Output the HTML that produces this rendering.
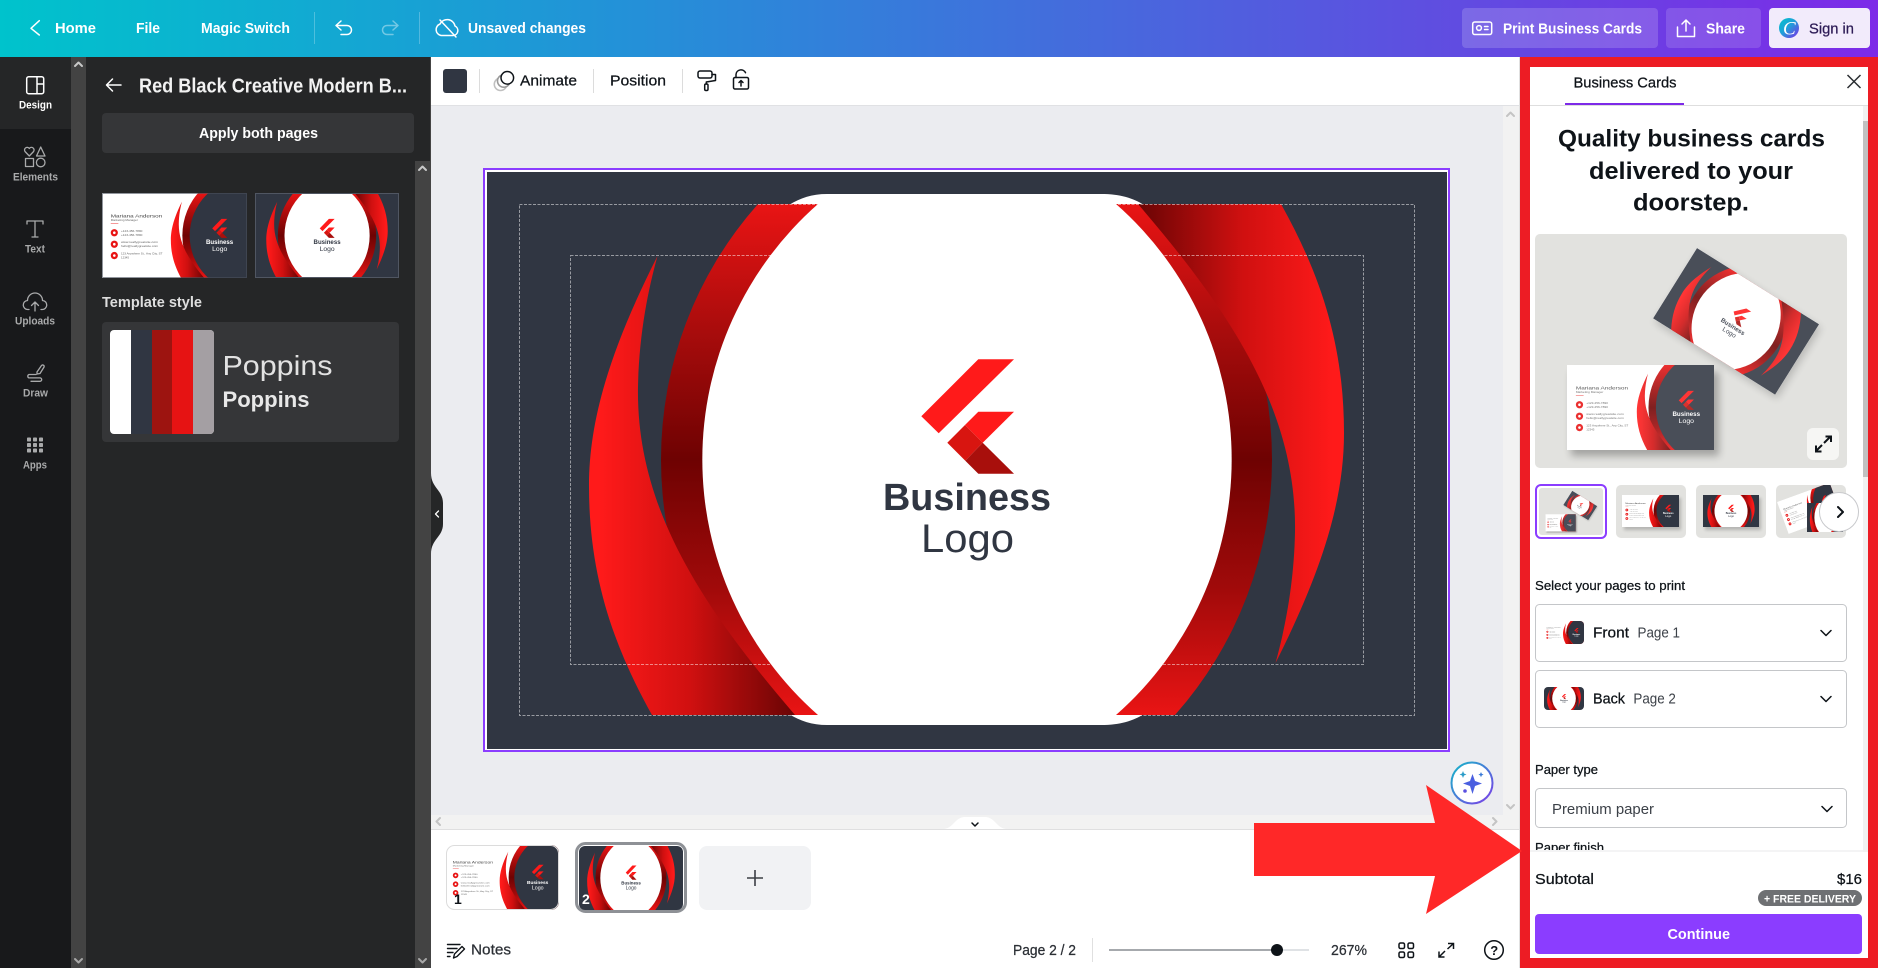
<!DOCTYPE html>
<html lang="en"><head><meta charset="utf-8"><title>Business Card Editor</title>
<style>
html,body{margin:0;padding:0;width:1878px;height:968px;overflow:hidden;background:#fff}
svg{display:block;font-family:"Liberation Sans",sans-serif}
.m{stroke:currentColor;stroke-width:.25}
.ln{fill:none;stroke-linecap:round;stroke-linejoin:round}
</style></head><body>
<svg width="1878" height="968" viewBox="0 0 1878 968" xmlns="http://www.w3.org/2000/svg">
<defs>
<linearGradient id="top" x1="0" x2="1" y1="0" y2="0"><stop offset="0" stop-color="#00c3cc"/><stop offset=".34" stop-color="#2490d8"/><stop offset=".75" stop-color="#5d50e0"/><stop offset="1" stop-color="#7d2ae8"/></linearGradient>
<linearGradient id="gc" gradientUnits="userSpaceOnUse" x1="600" x2="800" y1="0" y2="0"><stop offset="0" stop-color="#ff1a1a"/><stop offset=".45" stop-color="#d01010"/><stop offset="1" stop-color="#640404"/></linearGradient>
<linearGradient id="gr" gradientUnits="userSpaceOnUse" x1="0" x2="0" y1="204" y2="715"><stop offset="0" stop-color="#e91414"/><stop offset=".25" stop-color="#a80c0c"/><stop offset=".5" stop-color="#6e0202"/><stop offset=".75" stop-color="#a00a0a"/><stop offset="1" stop-color="#e91414"/></linearGradient>
<linearGradient id="mg" x1="0" x2="1" y1="0" y2="1"><stop offset="0" stop-color="#14b8c8"/><stop offset="1" stop-color="#7d3ce8"/></linearGradient>
<linearGradient id="cl" x1="0" x2="1" y1="0" y2="1"><stop offset="0" stop-color="#00c4cc"/><stop offset=".45" stop-color="#1fa0d8"/><stop offset="1" stop-color="#7d2ae8"/></linearGradient>
<filter id="bl" x="-30%" y="-30%" width="160%" height="160%"><feGaussianBlur stdDeviation="4"/></filter>
<filter id="bl2" x="-30%" y="-30%" width="160%" height="160%"><feGaussianBlur stdDeviation="1.5"/></filter>
<clipPath id="c1"><rect x="1535" y="234" width="312" height="234" rx="5"/></clipPath>
<clipPath id="c2"><rect x="1539" y="488" width="64" height="47" rx="3"/></clipPath>
<clipPath id="c3"><rect x="1776" y="485" width="70" height="53" rx="5"/></clipPath>
<clipPath id="c4"><rect x="1544" y="621" width="40" height="23" rx="4"/></clipPath>
<clipPath id="c5"><rect x="1544" y="687" width="40" height="23" rx="4"/></clipPath>
<clipPath id="c6"><rect x="446" y="845" width="113" height="65" rx="8"/></clipPath>
<clipPath id="c7"><rect x="579" y="846" width="104" height="64" rx="6"/></clipPath>
<g id="mark">
<polygon points="978.3,359.3 1014,359.3 938.7,433.3 921.3,416.3" fill="#ff1a1a"/>
<polygon points="978.3,411.7 1014,411.7 982.7,442.7 965,425" fill="#ff1a1a"/>
<polygon points="965,425 982.7,442.7 965.3,460.7 947.3,442.7" fill="#d81510"/>
<polygon points="982.7,442.7 1014,473.7 978.3,473.7 965.3,460.7" fill="#a80f0c"/>
</g>
<path id="cres" fill="url(#gc)" d="M657.5,256 C610,350 589,420 589,486 C589,570 610,640 652,715 L795,715 C705,610 636,510 638,387 C639,335 648,290 657.5,256 Z"/>
<symbol id="back" viewBox="519 204 895 511" preserveAspectRatio="none">
<rect x="519" y="204" width="895" height="511" fill="#303642"/>
<path d="M758,204 A385,385 0 0 0 758,715 L1175,715 A385,385 0 0 0 1175,204 Z" fill="url(#gr)"/>
<use href="#cres"/>
<use href="#cres" transform="rotate(180 966.5 459.5)"/>
<path d="M818,204 A340,340 0 0 0 818,715 L1116,715 A340,340 0 0 0 1116,204 Z" fill="#fff"/>
<use href="#mark"/>
<text x="883" y="510" font-size="38" font-weight="700" fill="#303642" textLength="168" lengthAdjust="spacingAndGlyphs">Business</text>
<text x="921" y="552" font-size="40" fill="#303642" textLength="93" lengthAdjust="spacingAndGlyphs">Logo</text>
</symbol>
<symbol id="front" viewBox="519 204 895 511" preserveAspectRatio="none">
<rect x="519" y="204" width="895" height="511" fill="#fff"/>
<circle cx="1400" cy="459.5" r="385" fill="url(#gr)"/>
<circle cx="1400" cy="459.5" r="340" fill="#303642"/>
<use href="#cres" transform="translate(355 0)"/>
<use href="#mark" transform="translate(278 0)"/>
<text x="1161" y="510" font-size="38" font-weight="700" fill="#fff" textLength="168" lengthAdjust="spacingAndGlyphs">Business</text>
<text x="1199" y="552" font-size="40" fill="#fff" textLength="93" lengthAdjust="spacingAndGlyphs">Logo</text>
<text x="573" y="351" font-size="28" fill="#444" textLength="318" lengthAdjust="spacingAndGlyphs">Mariana Anderson</text>
<text x="573" y="373" font-size="14" fill="#666" textLength="167" lengthAdjust="spacingAndGlyphs">Marketing Manager</text>
<rect x="573" y="387" width="47" height="3" fill="#e33"/>
<circle cx="595" cy="443" r="22" fill="#e81414"/><circle cx="595" cy="512" r="22" fill="#e81414"/><circle cx="595" cy="580" r="22" fill="#e81414"/>
<circle cx="595" cy="443" r="8" fill="#fff"/><circle cx="595" cy="512" r="8" fill="#fff"/><circle cx="595" cy="580" r="8" fill="#fff"/>
<g font-size="16" fill="#666">
<text x="636" y="439" textLength="132" lengthAdjust="spacingAndGlyphs">+123-456-7890</text>
<text x="636" y="464" textLength="132" lengthAdjust="spacingAndGlyphs">+123-456-7890</text>
<text x="636" y="506" textLength="229" lengthAdjust="spacingAndGlyphs">www.reallygreatsite.com</text>
<text x="636" y="530" textLength="229" lengthAdjust="spacingAndGlyphs">hello@reallygreatsite.com</text>
<text x="636" y="574" textLength="256" lengthAdjust="spacingAndGlyphs">123 Anywhere St., Any City, ST</text>
<text x="636" y="598" textLength="50" lengthAdjust="spacingAndGlyphs">12345</text>
</g>
</symbol>
<symbol id="hero" viewBox="1535 234 312 234" preserveAspectRatio="none">
<rect x="1535" y="234" width="312" height="234" fill="#e2e2df"/>
<rect x="1571" y="372" width="148" height="84" fill="#000" opacity=".28" filter="url(#bl)"/>
<g transform="translate(1699 252) rotate(32)"><rect width="144" height="83" fill="#000" opacity=".18" filter="url(#bl)"/></g>
<g transform="translate(1697 248) rotate(32)"><rect width="144" height="83" fill="#fff"/><use href="#back" width="144" height="83" opacity=".88"/></g>
<rect x="1567" y="365" width="147" height="85" fill="#fff"/><use href="#front" x="1567" y="365" width="147" height="85" opacity=".88"/>
</symbol>
</defs>

<!-- top bar -->
<rect width="1878" height="57" fill="url(#top)"/>
<g fill="#fff" font-size="15" font-weight="700">
<text x="55" y="33" textLength="41" lengthAdjust="spacingAndGlyphs">Home</text>
<text x="136" y="33" textLength="24" lengthAdjust="spacingAndGlyphs">File</text>
<text x="201" y="33" textLength="89" lengthAdjust="spacingAndGlyphs">Magic Switch</text>
<text x="468" y="33" textLength="118" lengthAdjust="spacingAndGlyphs">Unsaved changes</text>
</g>
<g class="ln" stroke="#fff" stroke-width="1.5">
<path d="M39.3,20.7 L31,28.3 L39.3,35"/>
<path d="M341,21 L336,25.5 L341,30 M336,25.5 H347 a4.5,4.5 0 0 1 0,9 H341"/>
<path d="M393,21 L398,25.5 L393,30 M398,25.5 H387 a4.5,4.5 0 0 0 0,9 H393" opacity=".4"/>
<path d="M441,35.5 H453 a5,5 0 0 0 2,-9.5 a8,8 0 0 0 -15,-2 a6,6 0 0 0 1,11.5 Z"/>
<path d="M440,20 L456,37"/>
</g>
<rect x="314" y="12" width="1" height="32" fill="#fff" opacity=".25"/>
<rect x="419" y="12" width="1" height="32" fill="#fff" opacity=".25"/>
<rect x="1462" y="8" width="196" height="40" rx="4" fill="#fff" opacity=".17"/>
<rect x="1666" y="8" width="95" height="40" rx="4" fill="#fff" opacity=".14"/>
<rect x="1769" y="8" width="101" height="40" rx="4" fill="#f2ebfb"/>
<g class="ln" stroke="#fff" stroke-width="1.5">
<rect x="1472.7" y="22" width="19" height="12.5" rx="2"/><circle cx="1479" cy="28" r="2.4"/><path d="M1484.5,26.5 H1488 M1484.5,29.5 H1488"/>
<path d="M1677.5,27 V36.5 H1694.5 V27 M1686,31 V20 M1682,24 L1686,20 L1690,24"/>
</g>
<g fill="#fff" font-size="15" font-weight="700">
<text x="1503" y="33.5" textLength="139" lengthAdjust="spacingAndGlyphs">Print Business Cards</text>
<text x="1706" y="33.5" textLength="39" lengthAdjust="spacingAndGlyphs">Share</text>
</g>
<circle cx="1789" cy="28" r="10" fill="url(#cl)"/>
<text x="1783" y="34.5" font-size="19" font-style="italic" fill="#fff" style='font-family:"Liberation Serif",serif'>C</text>
<text x="1809" y="33.5" font-size="15" class="m" color="#2c1a55" fill="#2c1a55" textLength="45" lengthAdjust="spacingAndGlyphs">Sign in</text>

<!-- left rail -->
<rect y="57" width="71" height="911" fill="#18191b"/>
<rect y="57" width="71" height="72" fill="#252627"/>
<rect x="71" y="57" width="15" height="911" fill="#434343"/>
<path d="M75,66 L78.5,62.5 L82,66" class="ln" stroke="#c8c8c8" stroke-width="2"/>
<path d="M75,959 L78.5,962.5 L82,959" class="ln" stroke="#a8a8a8" stroke-width="2"/>
<g class="ln" stroke="#fff" stroke-width="1.5">
<rect x="26.7" y="76.7" width="17" height="17" rx="2"/><path d="M37,77 V93.5 M37,84 H43.5"/>
</g>
<g class="ln" stroke="#a9aaab" stroke-width="1.3">
<path d="M29.3,156 L25,151.5 a2.6,2.6 0 0 1 4.3,-3 a2.6,2.6 0 0 1 4.3,3 Z"/><path d="M40.7,147 L45,156 H36.5 Z"/><rect x="25.5" y="158.5" width="8" height="8"/><circle cx="40.7" cy="162.5" r="4.3"/>
<path d="M27,224 V221 H43 V224 M35,221 V237 M32,237 H38"/>
<path d="M29,309.5 H28 a4.5,4.5 0 0 1 -.5,-9 a7.5,7.5 0 0 1 15,0 a4.5,4.5 0 0 1 -.5,9 H41 M35,311 V302 M31.5,305.5 L35,302 L38.5,305.5"/>
<path d="M36,374.5 H29 a1.8,1.8 0 0 0 0,3.4 H40 a1.7,1.7 0 0 1 0,3.4 H31 M37,372 L41.5,365.5 a1.5,1.5 0 0 1 2.5,1.6 L40,373.5 L37,374 Z"/>
</g>
<g fill="#a9aaab">
<rect x="27" y="437.5" width="4" height="4" rx=".8"/><rect x="33" y="437.5" width="4" height="4" rx=".8"/><rect x="39" y="437.5" width="4" height="4" rx=".8"/>
<rect x="27" y="443" width="4" height="4" rx=".8"/><rect x="33" y="443" width="4" height="4" rx=".8"/><rect x="39" y="443" width="4" height="4" rx=".8"/>
<rect x="27" y="448.5" width="4" height="4" rx=".8"/><rect x="33" y="448.5" width="4" height="4" rx=".8"/><rect x="39" y="448.5" width="4" height="4" rx=".8"/>
</g>
<g font-size="11" font-weight="700" fill="#a9aaab">
<text x="19" y="108.5" fill="#fff" textLength="33" lengthAdjust="spacingAndGlyphs">Design</text>
<text x="13" y="180.5" textLength="45" lengthAdjust="spacingAndGlyphs">Elements</text>
<text x="25" y="252.5" textLength="20" lengthAdjust="spacingAndGlyphs">Text</text>
<text x="15" y="324.5" textLength="40" lengthAdjust="spacingAndGlyphs">Uploads</text>
<text x="23" y="396.5" textLength="25" lengthAdjust="spacingAndGlyphs">Draw</text>
<text x="23" y="468.5" textLength="24" lengthAdjust="spacingAndGlyphs">Apps</text>
</g>

<!-- design panel -->
<rect x="86" y="57" width="345" height="911" fill="#252627"/>
<rect x="415" y="161" width="15" height="807" fill="#434343"/>
<path d="M419,170 L422.5,166.5 L426,170" class="ln" stroke="#c8c8c8" stroke-width="2"/>
<path d="M419,959 L422.5,962.5 L426,959" class="ln" stroke="#a8a8a8" stroke-width="2"/>
<path d="M121,85 H107 M112.5,79 L106.5,85 L112.5,91" class="ln" stroke="#fff" stroke-width="1.5"/>
<text x="139" y="92.5" font-size="20" font-weight="700" fill="#f2f2f2" textLength="268" lengthAdjust="spacingAndGlyphs">Red Black Creative Modern B...</text>
<rect x="102" y="113" width="312" height="40" rx="4" fill="#353638"/>
<text x="199" y="138" font-size="15" font-weight="700" fill="#fff" textLength="119" lengthAdjust="spacingAndGlyphs">Apply both pages</text>
<use href="#front" x="102" y="193" width="145" height="85"/>
<rect x="102.5" y="193.5" width="144" height="84" fill="none" stroke="#4a505c" stroke-opacity=".6"/>
<use href="#back" x="255" y="193" width="144" height="85"/>
<rect x="255.5" y="193.5" width="143" height="84" fill="none" stroke="#505662"/>
<text x="102" y="307" font-size="15" font-weight="700" fill="#dedede" textLength="100" lengthAdjust="spacingAndGlyphs">Template style</text>
<rect x="102" y="322" width="297" height="120" rx="4" fill="#353638"/>
<rect x="110" y="330" width="104" height="104" rx="4" fill="#fff"/>
<rect x="131" y="330" width="21" height="104" fill="#303642"/>
<rect x="152" y="330" width="20" height="104" fill="#9d1410"/>
<rect x="172" y="330" width="21" height="104" fill="#e61313"/>
<path d="M193,330 H210 a4,4 0 0 1 4,4 V430 a4,4 0 0 1 -4,4 H193 Z" fill="#a49fa3"/>
<text x="222.5" y="375" font-size="28" fill="#e2e2e2" textLength="110" lengthAdjust="spacingAndGlyphs">Poppins</text>
<text x="222.5" y="407" font-size="22" font-weight="700" fill="#e8e8e8" textLength="87" lengthAdjust="spacingAndGlyphs">Poppins</text>

<!-- canvas area -->
<rect x="430" y="57" width="1090" height="911" fill="#fff"/>
<rect x="430" y="57" width="1" height="911" fill="#444"/>
<rect x="431" y="105" width="1088" height="724" fill="#ebecf0"/>
<rect x="431" y="105" width="1088" height="1" fill="#e0e1e4"/>
<rect x="1503" y="106" width="16" height="723" fill="#f2f2f2"/>
<rect x="431" y="815" width="1088" height="14" fill="#f2f2f2"/>
<rect x="431" y="829" width="1089" height="1" fill="#dfdfe0"/>
<rect x="1519" y="57" width="1" height="911" fill="#e0e0e0"/>
<path d="M1507,116 L1510.5,112.5 L1514,116 M1507,805 L1510.5,808.5 L1514,805 M1493,818 L1496.5,821.5 L1493,825 M440,818 L436.5,821.5 L440,825" class="ln" stroke="#c4c4c4" stroke-width="2"/>
<!-- toolbar -->
<rect x="443" y="69" width="24" height="24" rx="3" fill="#303642"/>
<rect x="479" y="69" width="1" height="24" fill="#dcdcdc"/><rect x="593" y="69" width="1" height="24" fill="#dcdcdc"/><rect x="682" y="69" width="1" height="24" fill="#dcdcdc"/>
<circle cx="500.5" cy="84.3" r="6.2" fill="#fff" stroke="#c0c0c0" stroke-width="1.6"/>
<circle cx="503.7" cy="81" r="6.2" fill="#fff" stroke="#9a9a9a" stroke-width="1.6"/>
<circle cx="507.3" cy="77.8" r="6.3" fill="#fff" stroke="#0e1318" stroke-width="1.5"/>
<g font-size="15" fill="#0e1318" color="#0e1318" class="m">
<text x="520" y="85.5" textLength="57" lengthAdjust="spacingAndGlyphs">Animate</text>
<text x="610" y="85.5" textLength="56" lengthAdjust="spacingAndGlyphs">Position</text>
</g>
<g class="ln" stroke="#0e1318" stroke-width="1.5">
<rect x="698" y="71" width="14" height="7" rx="2"/><path d="M712,74.5 H715.5 V80.5 L706.3,82 V84"/><rect x="704.7" y="84" width="3.3" height="6.5" rx="1.3"/>
<rect x="733.5" y="77.5" width="15" height="11.5" rx="1.5"/><path d="M736,77.5 V74.5 a5,5 0 0 1 9.5,-1.8"/><path d="M741,86 V80.5 M739,82.5 L741,80.5 L743,82.5"/>
</g>
<!-- big card -->
<rect x="484" y="169" width="965" height="582" fill="#fff" stroke="#8b3dff" stroke-width="2"/>
<rect x="487" y="172" width="960" height="577" fill="#303642"/>
<path d="M789,205 C800,198 812,194 827,194 L1101,194 C1120,194 1133,198 1144,205 Z" fill="#fff"/>
<path d="M789,714 C800,721 812,725 827,725 L1101,725 C1120,725 1133,721 1144,714 Z" fill="#fff"/>
<use href="#back" x="519" y="204" width="895" height="511"/>
<g fill="none" stroke="#fff" stroke-opacity=".5" stroke-dasharray="3 1.5">
<rect x="519.5" y="204.5" width="895" height="511"/>
<rect x="570.5" y="255.5" width="793" height="409"/>
</g>
<!-- handle -->
<path d="M431,473 C431,488 443,490 443,503 L443,524 C443,537 431,539 431,554 Z" fill="#252627"/>
<path d="M438.5,511 L435.5,514 L438.5,517" class="ln" stroke="#fff" stroke-width="1.3"/>
<path d="M943,829 C953,829 955,817 965,817 L985,817 C995,817 997,829 1007,829 Z" fill="#fff"/>
<path d="M972,823 L975,826 L978,823" class="ln" stroke="#0e1318" stroke-width="1.5"/>
<!-- magic -->
<circle cx="1472" cy="783" r="20.5" fill="#fff" stroke="url(#mg)" stroke-width="2"/>
<path d="M1472.5,774 L1475,781 L1482,783.5 L1475,786 L1472.5,794 L1470,786 L1463,783.5 L1470,781 Z" fill="#4a5fe0"/>
<path d="M1463,771 l1,2.5 2.5,1 -2.5,1 -1,2.5 -1,-2.5 -2.5,-1 2.5,-1 Z" fill="#2a9cc8"/>
<path d="M1481,772 l.8,1.8 1.8,.8 -1.8,.8 -.8,1.8 -.8,-1.8 -1.8,-.8 1.8,-.8 Z" fill="#3a7ad8"/>
<circle cx="1465" cy="791" r="1.8" fill="#5a50e0"/>
<!-- bottom thumbs -->
<rect x="446" y="845" width="113" height="65" rx="8" fill="#fff"/>
<g clip-path="url(#c6)"><use href="#front" x="446" y="845" width="113" height="65"/></g>
<rect x="446.5" y="845.5" width="112" height="64" rx="8" fill="none" stroke="#dcdcdc"/>
<rect x="576.5" y="843.5" width="109" height="68" rx="9" fill="#fff" stroke="#8e9196" stroke-width="3"/>
<g clip-path="url(#c7)"><use href="#back" x="579" y="846" width="104" height="64"/></g>
<rect x="699" y="846" width="112" height="64" rx="8" fill="#f1f2f4"/>
<path d="M755,870 V886 M747,878 H763" stroke="#3c3f45" stroke-width="1.6"/>
<text x="454" y="904" font-size="14" font-weight="700" fill="#0e1318">1</text>
<text x="582" y="904" font-size="14" font-weight="700" fill="#fff">2</text>
<!-- bottom bar -->
<g class="ln" stroke="#0e1318" stroke-width="1.4">
<path d="M447.5,944.5 H460 M447.5,948.5 H457 M447.5,952.5 H453 M447.5,956.5 H450"/>
<path d="M453.5,958 L454.5,954 L462,946.5 L464.5,949 L457,956.5 Z"/>
</g>
<g font-size="15" fill="#2b2f35" color="#2b2f35" class="m">
<text x="471" y="954.7" textLength="40" lengthAdjust="spacingAndGlyphs">Notes</text>
<text x="1013" y="955" textLength="63" lengthAdjust="spacingAndGlyphs">Page 2 / 2</text>
<text x="1331" y="955" textLength="36" lengthAdjust="spacingAndGlyphs">267%</text>
</g>
<rect x="1092" y="938" width="1" height="24" fill="#e0e0e0"/>
<rect x="1109" y="949" width="168" height="2" fill="#a6a9ad"/>
<rect x="1277" y="949" width="32" height="2" fill="#dfe2e5"/>
<circle cx="1277" cy="950" r="6" fill="#0e1318"/>
<g fill="none" stroke="#0e1318" stroke-width="1.5">
<rect x="1399" y="943" width="5.5" height="5.5" rx="1.5"/><rect x="1408" y="943" width="5.5" height="5.5" rx="1.5"/><rect x="1399" y="952" width="5.5" height="5.5" rx="1.5"/><rect x="1408" y="952" width="5.5" height="5.5" rx="1.5"/>
<path d="M1447.5,949 L1453.5,943.5 M1448,943.5 H1453.5 V949 M1445,951 L1439,957 M1439,951.5 V957 H1444.5"/>
<circle cx="1494" cy="950" r="9.3"/>
</g>
<text x="1490.3" y="955" font-size="13" font-weight="700" fill="#0e1318">?</text>

<!-- right panel -->
<rect x="1520" y="57" width="358" height="911" fill="#ed1c24"/>
<rect x="1530" y="67" width="338" height="891" fill="#fff"/>
<text x="1573.5" y="87.5" font-size="15" fill="#0e1318" color="#0e1318" class="m" textLength="103" lengthAdjust="spacingAndGlyphs">Business Cards</text>
<rect x="1530" y="105" width="338" height="1" fill="#dedede"/>
<rect x="1565" y="103" width="119" height="2" fill="#7d2ae8"/>
<path d="M1847.5,75 L1860.5,88 M1860.5,75 L1847.5,88" stroke="#2a2d31" stroke-width="1.5" fill="none"/>
<rect x="1863" y="106" width="5" height="746" fill="#f1f1f1"/>
<rect x="1863" y="121" width="5" height="356" fill="#c1c1c1"/>
<g font-size="24" font-weight="700" fill="#0e1318">
<text x="1558" y="146.7" textLength="267" lengthAdjust="spacingAndGlyphs">Quality business cards</text>
<text x="1589" y="179" textLength="204" lengthAdjust="spacingAndGlyphs">delivered to your</text>
<text x="1633" y="210.7" textLength="116" lengthAdjust="spacingAndGlyphs">doorstep.</text>
</g>
<g clip-path="url(#c1)"><use href="#hero" x="1535" y="234" width="312" height="234"/></g>
<rect x="1807" y="428" width="32" height="32" rx="6" fill="#f6f6f4"/>
<path d="M1824,443 L1830.5,436.5 M1825.5,436.5 H1831 V442 M1822,445 L1816,451 M1816,445.5 V451.5 H1821.5" fill="none" stroke="#0e1318" stroke-width="2"/>
<!-- hero thumbs -->
<rect x="1536" y="485" width="70" height="53" rx="5" fill="#fff" stroke="#8b3dff" stroke-width="2"/>
<g clip-path="url(#c2)"><use href="#hero" x="1539" y="488" width="64" height="47"/></g>
<rect x="1616" y="485" width="70" height="53" rx="5" fill="#e2e2df"/>
<rect x="1624" y="498" width="57" height="32" fill="#000" opacity=".2" filter="url(#bl2)"/>
<use href="#front" x="1622" y="495" width="57" height="32"/>
<rect x="1696" y="485" width="70" height="53" rx="5" fill="#e2e2df"/>
<rect x="1705" y="498" width="56" height="32" fill="#000" opacity=".2" filter="url(#bl2)"/>
<use href="#back" x="1703" y="495" width="56" height="32"/>
<g clip-path="url(#c3)">
<rect x="1776" y="485" width="70" height="53" fill="#e2e2df"/>
<g transform="translate(1777 502) rotate(-20)"><use href="#front" width="56" height="34"/></g>
<use href="#back" x="1807" y="503" width="36" height="29"/>
</g>
<circle cx="1839" cy="512" r="19.5" fill="#fff" stroke="#c8c9cc"/>
<path d="M1838,507 L1843,512 L1838,517" class="ln" stroke="#0e1318" stroke-width="2"/>
<!-- form -->
<g font-size="13" fill="#0e1318" color="#0e1318" class="m">
<text x="1535" y="590" textLength="150" lengthAdjust="spacingAndGlyphs">Select your pages to print</text>
<text x="1535" y="774" textLength="63" lengthAdjust="spacingAndGlyphs">Paper type</text>
<text x="1535" y="852" textLength="69" lengthAdjust="spacingAndGlyphs">Paper finish</text>
</g>
<g fill="#fff" stroke="#c4c6c9">
<rect x="1535.5" y="604.5" width="311" height="57" rx="4"/>
<rect x="1535.5" y="670.5" width="311" height="57" rx="4"/>
<rect x="1535.5" y="788.5" width="311" height="39" rx="4"/>
</g>
<g clip-path="url(#c4)"><use href="#front" x="1544" y="621" width="40" height="23"/></g>
<g clip-path="url(#c5)"><use href="#back" x="1544" y="687" width="40" height="23"/></g>
<g font-size="15" fill="#0e1318" color="#0e1318">
<text x="1593" y="637.7" class="m" textLength="36" lengthAdjust="spacingAndGlyphs">Front</text>
<text x="1593" y="703.7" class="m" textLength="32" lengthAdjust="spacingAndGlyphs">Back</text>
<text x="1637.5" y="637.7" fill="#3c4148" textLength="42.5" lengthAdjust="spacingAndGlyphs">Page 1</text>
<text x="1633.4" y="703.7" fill="#3c4148" textLength="42.5" lengthAdjust="spacingAndGlyphs">Page 2</text>
<text x="1552" y="814" fill="#3c4148" textLength="102" lengthAdjust="spacingAndGlyphs">Premium paper</text>
</g>
<path d="M1821,630.5 L1826,635.5 L1831,630.5 M1821,696.5 L1826,701.5 L1831,696.5 M1822,806.5 L1827,811.5 L1832,806.5" class="ln" stroke="#0e1318" stroke-width="1.5"/>
<!-- footer -->
<rect x="1530" y="852" width="338" height="106" fill="#fff"/>
<rect x="1530" y="850" width="333" height="2" fill="#f4f4f5"/>
<g font-size="15" fill="#0e1318" color="#0e1318" class="m">
<text x="1535" y="884" textLength="59" lengthAdjust="spacingAndGlyphs">Subtotal</text>
<text x="1837" y="884" textLength="25" lengthAdjust="spacingAndGlyphs">$16</text>
</g>
<rect x="1758" y="890" width="104" height="16" rx="8" fill="#6e7073"/>
<text x="1764" y="902.3" font-size="11" font-weight="700" fill="#fff" textLength="92" lengthAdjust="spacingAndGlyphs">+ FREE DELIVERY</text>
<rect x="1535" y="914" width="327" height="40" rx="4" fill="#8b3dff"/>
<text x="1667.5" y="939" font-size="15" font-weight="700" fill="#fff" textLength="62.5" lengthAdjust="spacingAndGlyphs">Continue</text>
<!-- arrow -->
<polygon points="1254,823 1435,823 1426,785 1522,851 1426,914 1435,876 1254,876" fill="#ff2828"/>
</svg>
</body></html>
